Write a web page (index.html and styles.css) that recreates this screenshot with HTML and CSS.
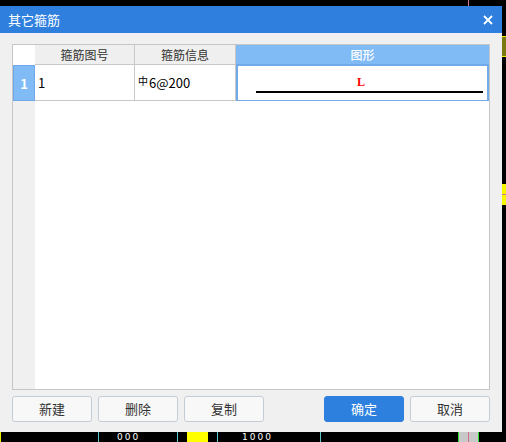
FILE: index.html
```html
<!DOCTYPE html>
<html lang="zh-CN">
<head>
<meta charset="utf-8">
<title>其它箍筋</title>
<link rel="stylesheet" href="styles.css">
</head>
<body>
<div class="screen">
  <div class="strip-top"><span class="mark-pink-v top-pink"></span></div>
  <div class="middle">
    <div class="dialog">
      <div class="titlebar">
        <span class="title">其它箍筋</span>
        <svg class="close" width="10" height="10" viewBox="0 0 10 10"><path d="M1 1L9 9M9 1L1 9" stroke="#fff" stroke-width="1.8" fill="none"/></svg>
      </div>
      <div class="content">
        <div class="grid">
          <div class="corner"></div>
          <div class="hcell">箍筋图号</div>
          <div class="hcell">箍筋信息</div>
          <div class="hcell hsel">图形</div>

          <div class="rowhead">1</div>
          <div class="cell">1</div>
          <div class="cell"><span class="phi">中</span>6@200</div>
          <div class="cell shape">
            <span class="lmark">L</span>
            <span class="bar"></span>
          </div>

          <div class="filler-head"></div>
          <div class="filler"></div>
        </div>
        <div class="buttons">
          <button class="btn">新建</button>
          <button class="btn">删除</button>
          <button class="btn">复制</button>
          <button class="btn primary push">确定</button>
          <button class="btn">取消</button>
        </div>
      </div>
    </div>
    <div class="strip-right">
      <span class="olive"></span>
      <span class="yellow"><span class="pink-h"></span></span>
    </div>
  </div>
  <div class="strip-bottom">
    <span class="b-yellow-edge"></span>
    <span class="cyan c1"></span>
    <span class="digits d1">000</span>
    <span class="cyan c2"></span>
    <span class="b-yellow"></span>
    <span class="cyan c3"></span>
    <span class="digits d2">1000</span>
    <span class="cyan c4"></span>
    <span class="b-gray"><span class="mark-pink-v"></span></span>
  </div>
</div>
</body>
</html>
```

FILE: styles.css
```css
* { box-sizing: border-box; }
html, body { margin: 0; padding: 0; }
body {
  width: 506px;
  height: 442px;
  background: #000;
  overflow: hidden;
  font-family: "Noto Sans CJK SC", "Noto Sans", sans-serif;
}
.screen { width: 506px; height: 442px; display: flex; flex-direction: column; }

.strip-top { height: 6px; position: relative; flex: none; }
.mark-pink-v { position: absolute; top: 0; bottom: 0; width: 1px; background: #d4708c; }
.top-pink { left: 468px; }

.middle { display: flex; height: 426px; flex: none; }
.dialog { width: 502px; display: flex; flex-direction: column; background: #f0f0f0; }

.titlebar {
  height: 27px;
  background: #2e7fde;
  color: #fff;
  display: flex;
  align-items: center;
  justify-content: space-between;
  padding: 0 9px 0 8px;
  flex: none;
}
.title { font-size: 13px; line-height: 14px; }
.close { display: block; }

.content {
  flex: 1;
  padding: 11px 12px 10px 12px;
  display: flex;
  flex-direction: column;
}

.grid {
  height: 346px;
  border: 1px solid #c6c6c6;
  background: #fff;
  display: grid;
  grid-template-columns: 22px 100px 101px 1fr;
  grid-template-rows: 20px 36px 1fr;
  font-size: 12px;
  color: #222;
}
.corner { background: #fff; }
.hcell {
  background: #efefef;
  border-right: 1px solid #c8c8c8;
  border-bottom: 1px solid #c8c8c8;
  display: flex;
  align-items: center;
  justify-content: center;
  color: #333;
  line-height: 14px;
}
.hsel {
  background: #80bbf6;
  color: #fff;
  border-right: none;
  border-bottom: 1px solid #70aaea;
  font-weight: 500;
}
.rowhead {
  background: #80bbf6;
  border: 1px solid #6ea8ea;
  color: #fff;
  font-weight: 700;
  font-size: 13px;
  display: flex;
  align-items: center;
  justify-content: center;
}
.cell {
  border-right: 1px solid #c8c8c8;
  border-bottom: 1px solid #c8c8c8;
  display: flex;
  align-items: center;
  padding: 0 0 1px 3px;
  font-size: 13px;
  color: #000;
}
.phi { font-size: 10px; position: relative; top: -2px; margin-right: 1px; }
.shape {
  border: 2px solid #70aaea;
  margin: -1px 0 -1px 0;
  display: flex;
  flex-direction: column;
  align-items: stretch;
  padding: 10px 4px 0 18px;
}
.lmark {
  font-family: "Liberation Serif", serif;
  color: #f00;
  font-size: 12px;
  line-height: 12px;
  font-weight: 700;
  margin-left: 101px;
  align-self: flex-start;
}
.bar { display: block; height: 2px; background: #000; margin-top: 3px; }

.filler-head { background: #f0f0f0; }
.filler { grid-column: 2 / 5; background: #fff; }

.buttons {
  margin-top: 6px;
  height: 26px;
  display: flex;
  gap: 6px;
}
.btn {
  width: 80px;
  height: 26px;
  border: 1px solid #c4ccd8;
  border-radius: 3px;
  background: #f8f8f8;
  color: #333;
  font-family: "Noto Sans CJK SC", sans-serif;
  font-size: 13px;
  padding: 0;
  line-height: 24px;
}
.btn.primary { background: #2e80de; border-color: #2e80de; color: #fff; }
.push { margin-left: auto; }

.strip-right { width: 4px; position: relative; }
.olive { position: absolute; left: 0; right: 0; top: 30px; height: 21px; background: #7a7812; border-top: 1px solid #f5f500; border-bottom: 1px solid #f5f500; }
.yellow { position: absolute; left: 0; right: 0; top: 178px; height: 21px; background: #f7f700; }
.pink-h { position: absolute; left: 0; right: 0; top: 10px; height: 1px; background: #d4708c; }

.strip-bottom { height: 10px; position: relative; overflow: hidden; flex: none; }
.b-yellow-edge { position: absolute; left: 0; top: 0; bottom: 0; width: 1px; background: #f0f000; }
.cyan { position: absolute; top: 0; bottom: 0; width: 1px; background: #5cc8cc; }
.c1 { left: 98px; }
.c2 { left: 177px; }
.c3 { left: 217px; }
.c4 { left: 320px; }
.b-yellow { position: absolute; left: 187px; width: 21px; top: 0; bottom: 0; background: #ffff00; }
.b-gray { position: absolute; left: 458px; width: 21px; top: 0; bottom: 0; background: #c8c8c8; border-left: 1px solid #30e030; border-right: 1px solid #30e030; }
.b-gray .mark-pink-v { left: 9px; }
.digits {
  position: absolute;
  top: 0;
  color: #fff;
  font-family: "DejaVu Sans", sans-serif;
  font-size: 9px;
  line-height: 10px;
  letter-spacing: 2px;
}
.d1 { left: 117px; }
.d2 { left: 242px; }
```
